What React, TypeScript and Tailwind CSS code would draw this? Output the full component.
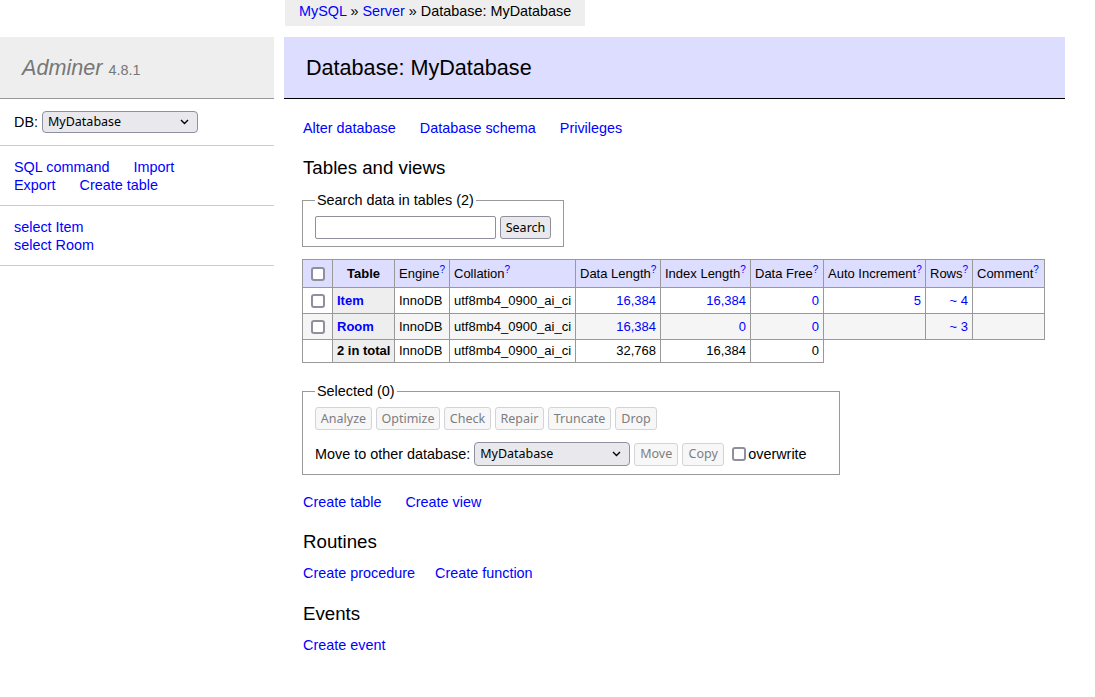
import React from 'react';

const link = 'text-[#00f]';
const ctl = "font-['Noto_Sans',sans-serif] text-[12.5px]";
const check = 'block appearance-none w-[14px] h-[14px] m-0 border-2 border-[#8f8f9d] rounded-[3px] bg-white';

const Help = () => <sup className={`${link} text-[10px] relative top-[-5px]`}>?</sup>;

const Select: React.FC<{ width: string; height: string }> = ({ width, height }) => (
  <div className={`relative ${width}`}>
    <select
      defaultValue="MyDatabase"
      className={`${ctl} w-full ${height} appearance-none rounded-[4px] border border-[#8f8f9d] bg-[#e9e9ed] pl-[5px] text-black`}
    >
      <option>MyDatabase</option>
    </select>
    <svg
      className="pointer-events-none absolute right-[9px] top-1/2 -translate-y-1/2"
      width="9"
      height="6"
      viewBox="0 0 9 6"
      fill="none"
      stroke="#000"
      strokeWidth="1.4"
    >
      <path d="M1 1l3.5 3.5L8 1" />
    </svg>
  </div>
);

const Btn: React.FC<{ label: string; width: string; disabled?: boolean }> = ({ label, width, disabled }) => (
  <button
    className={`${ctl} ${width} h-[23px] rounded-[3px] border ${
      disabled ? 'border-[#d4d4d8] bg-[#f7f7f8] text-[#7d7d80]' : 'border-[#8f8f9d] bg-[#e9e9ed] text-black'
    }`}
  >
    {label}
  </button>
);

const rows = [
  { name: 'Item', data: '16,384', index: '16,384', free: '0', auto: '5', rows: '~ 4', bg: 'bg-white' },
  { name: 'Room', data: '16,384', index: '0', free: '0', auto: '', rows: '~ 3', bg: 'bg-[#f5f5f5]' },
];

const td = 'border border-[#999] px-[4px]';

export default function App() {
  return (
    <div className="flex w-[1095px] min-h-[697px] bg-white text-black font-['Liberation_Sans',Arial,sans-serif] text-[14.4px] leading-[18px]">
      {/* Menu */}
      <aside className="w-[274px] shrink-0 pt-[37px]">
        <h1 className="h-[62px] overflow-hidden bg-[#eee] border-b border-[#999] pt-[17px] pl-[22px] leading-[27px] text-[21.6px] text-[#777]">
          <span className="italic">Adminer</span> <span className="text-[14.4px]">4.8.1</span>
        </h1>
        <div className="border-b border-[#ccc] pl-[14px] pt-[12px] pb-[12px] flex items-center gap-[4px]">
          <span>DB:</span>
          <Select width="w-[156px]" height="h-[22px]" />
        </div>
        <div className="border-b border-[#ccc] pl-[14px] pt-[12px] pb-[11px]">
          <div className="flex gap-x-[24px]">
            <a className={link}>SQL command</a>
            <a className={link}>Import</a>
          </div>
          <div className="flex gap-x-[24px]">
            <a className={link}>Export</a>
            <a className={link}>Create table</a>
          </div>
        </div>
        <div className="border-b border-[#ccc] pl-[14px] pt-[12px] pb-[11px]">
          <div><a className={link}>select Item</a></div>
          <div><a className={link}>select Room</a></div>
        </div>
      </aside>

      {/* Content */}
      <main className="ml-[10px] w-[781px] flex flex-col">
        <div className="self-start ml-px h-[26px] bg-[#eee] px-[14px] leading-[22px] whitespace-nowrap">
          <a className={link}>MySQL</a> » <a className={link}>Server</a> » Database: MyDatabase
        </div>
        <h2 className="mt-[11px] bg-[#ddf] border-b border-black pt-[17px] pb-[17px] pl-[22px] leading-[27px] text-[21.6px]">
          Database: MyDatabase
        </h2>

        <div className="pl-[18px]">
          <div className="mt-[20px] flex gap-x-[24px] pl-px">
            <a className={link}>Alter database</a>
            <a className={link}>Database schema</a>
            <a className={link}>Privileges</a>
          </div>

          <h3 className="mt-[19px] pl-px text-[18.7px] leading-[23px]">Tables and views</h3>

          <fieldset className="mt-[12px] w-[262px] border border-[#999] px-[12px] pt-[7px] pb-[7px]">
            <legend className="px-[2px] leading-[18px]">Search data in tables (2)</legend>
            <div className="flex gap-[4px]">
              <input className="w-[181px] h-[23px] border border-[#8f8f9d] rounded-[2px] bg-white" />
              <Btn label="Search" width="w-[51px]" />
            </div>
          </fieldset>

          <table className="mt-[12px] w-[742px] table-fixed border-collapse text-[13px] leading-[16px]">
            <colgroup>
              <col className="w-[30px]" />
              <col className="w-[62px]" />
              <col className="w-[55px]" />
              <col className="w-[126px]" />
              <col className="w-[85px]" />
              <col className="w-[90px]" />
              <col className="w-[73px]" />
              <col className="w-[102px]" />
              <col className="w-[47px]" />
              <col className="w-[72px]" />
            </colgroup>
            <thead>
              <tr className="h-[28px] bg-[#ddf]">
                <td className={td}>
                  <input type="checkbox" className={`${check} ml-[4px]`} />
                </td>
                <th className={`${td} text-center font-bold`}>Table</th>
                <td className={`${td} whitespace-nowrap`}>Engine<Help /></td>
                <td className={`${td} whitespace-nowrap`}>Collation<Help /></td>
                <td className={`${td} whitespace-nowrap`}>Data Length<Help /></td>
                <td className={`${td} whitespace-nowrap`}>Index Length<Help /></td>
                <td className={`${td} whitespace-nowrap`}>Data Free<Help /></td>
                <td className={`${td} whitespace-nowrap`}>Auto Increment<Help /></td>
                <td className={`${td} whitespace-nowrap`}>Rows<Help /></td>
                <td className={`${td} whitespace-nowrap`}>Comment<Help /></td>
              </tr>
            </thead>
            <tbody>
              {rows.map((r) => (
                <tr key={r.name} className={`h-[26px] ${r.bg}`}>
                  <td className={td}>
                    <input type="checkbox" className={`${check} ml-[4px]`} />
                  </td>
                  <th className={`${td} bg-[#eee] text-left font-bold`}>
                    <a className={link}>{r.name}</a>
                  </th>
                  <td className={td}>InnoDB</td>
                  <td className={`${td} whitespace-nowrap`}>utf8mb4_0900_ai_ci</td>
                  <td className={`${td} text-right`}><a className={link}>{r.data}</a></td>
                  <td className={`${td} text-right`}><a className={link}>{r.index}</a></td>
                  <td className={`${td} text-right`}><a className={link}>{r.free}</a></td>
                  <td className={`${td} text-right`}><a className={link}>{r.auto}</a></td>
                  <td className={`${td} text-right`}><a className={link}>{r.rows}</a></td>
                  <td className={td}></td>
                </tr>
              ))}
              <tr className="h-[23px]">
                <td className={td}></td>
                <th className={`${td} bg-[#eee] text-left font-bold whitespace-nowrap`}>2 in total</th>
                <td className={td}>InnoDB</td>
                <td className={`${td} whitespace-nowrap`}>utf8mb4_0900_ai_ci</td>
                <td className={`${td} text-right`}>32,768</td>
                <td className={`${td} text-right`}>16,384</td>
                <td className={`${td} text-right`}>0</td>
              </tr>
            </tbody>
          </table>

          <fieldset className="mt-[19px] w-[538px] border border-[#999] px-[12px] pt-[7px] pb-[8px]">
            <legend className="px-[2px] leading-[18px]">Selected (0)</legend>
            <div className="flex gap-[4px]">
              <Btn label="Analyze" width="w-[57px]" disabled />
              <Btn label="Optimize" width="w-[64px]" disabled />
              <Btn label="Check" width="w-[47px]" disabled />
              <Btn label="Repair" width="w-[49px]" disabled />
              <Btn label="Truncate" width="w-[63px]" disabled />
              <Btn label="Drop" width="w-[42px]" disabled />
            </div>
            <div className="mt-[12px] flex items-center gap-[4px]">
              <span>Move to other database:</span>
              <Select width="w-[156px]" height="h-[24px]" />
              <Btn label="Move" width="w-[44px]" disabled />
              <Btn label="Copy" width="w-[42px]" disabled />
              <label className="ml-[4px] flex items-center gap-[2px]">
                <input type="checkbox" className={check} />
                overwrite
              </label>
            </div>
          </fieldset>

          <div className="mt-[18px] flex gap-x-[24px] pl-px">
            <a className={link}>Create table</a>
            <a className={link}>Create view</a>
          </div>

          <h3 className="mt-[19px] pl-px text-[18.7px] leading-[23px]">Routines</h3>
          <div className="mt-[11px] flex gap-x-[20px] pl-px">
            <a className={link}>Create procedure</a>
            <a className={link}>Create function</a>
          </div>

          <h3 className="mt-[20px] pl-px text-[18.7px] leading-[23px]">Events</h3>
          <div className="mt-[11px] pl-px">
            <a className={link}>Create event</a>
          </div>
        </div>
      </main>
    </div>
  );
}
